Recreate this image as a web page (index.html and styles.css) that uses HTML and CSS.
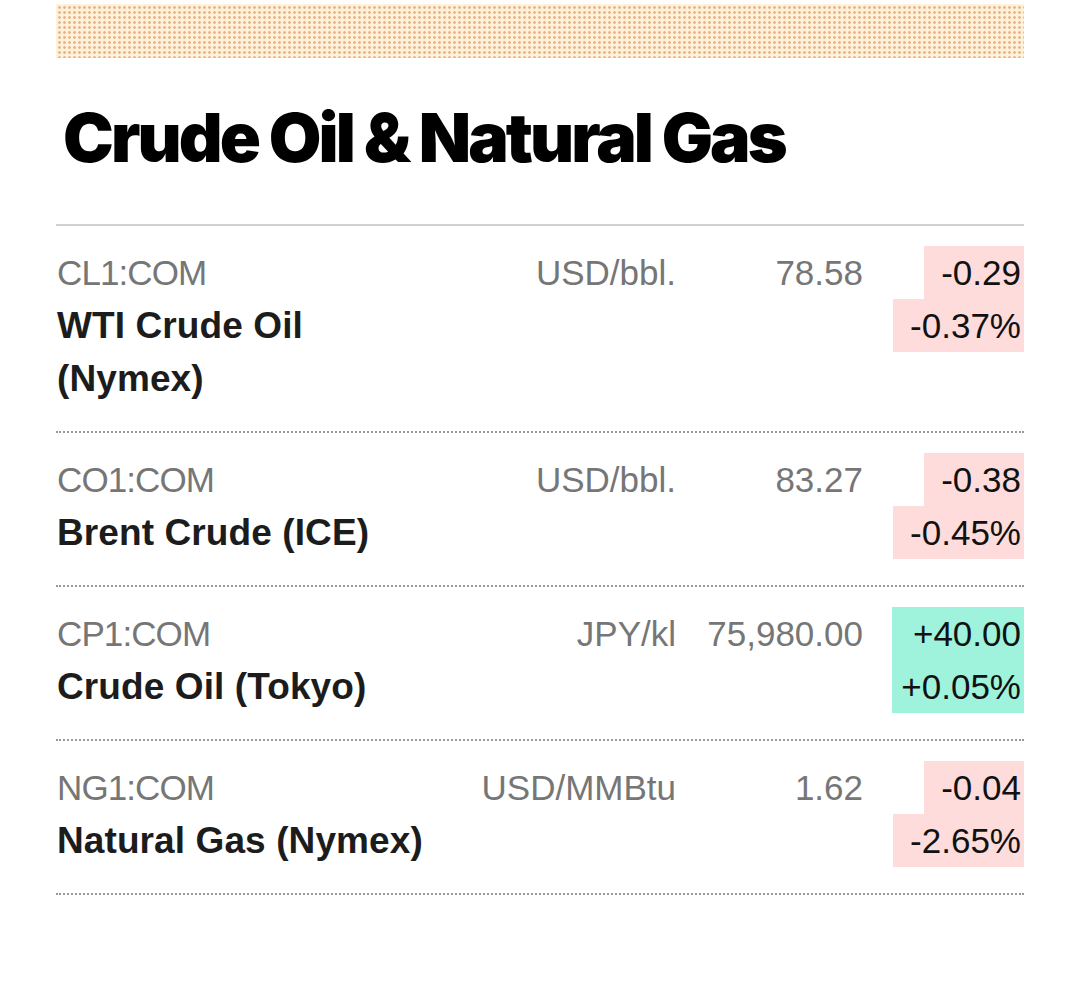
FILE: index.html
```html
<!DOCTYPE html>
<html>
<head>
<meta charset="utf-8">
<link rel="stylesheet" href="styles.css">
</head>
<body>
<div class="page">
  <div class="banner"></div>
  <h1 class="title">Crude Oil &amp; Natural Gas</h1>
  <div class="table">
    <div class="row">
      <div class="ident">
        <div class="code">CL1:COM</div>
        <div class="name">WTI Crude Oil (Nymex)</div>
      </div>
      <div class="unit">USD/bbl.</div>
      <div class="price">78.58</div>
      <div class="change down"><span>-0.29</span><span>-0.37%</span></div>
    </div>
    <div class="row">
      <div class="ident">
        <div class="code">CO1:COM</div>
        <div class="name">Brent Crude (ICE)</div>
      </div>
      <div class="unit">USD/bbl.</div>
      <div class="price">83.27</div>
      <div class="change down"><span>-0.38</span><span>-0.45%</span></div>
    </div>
    <div class="row">
      <div class="ident">
        <div class="code">CP1:COM</div>
        <div class="name">Crude Oil (Tokyo)</div>
      </div>
      <div class="unit">JPY/kl</div>
      <div class="price">75,980.00</div>
      <div class="change up"><span>+40.00</span><span>+0.05%</span></div>
    </div>
    <div class="row">
      <div class="ident">
        <div class="code">NG1:COM</div>
        <div class="name">Natural Gas (Nymex)</div>
      </div>
      <div class="unit">USD/MMBtu</div>
      <div class="price">1.62</div>
      <div class="change down"><span>-0.04</span><span>-2.65%</span></div>
    </div>
  </div>
</div>
</body>
</html>
```

FILE: styles.css
```css
html, body {
  margin: 0;
  padding: 0;
  background: #ffffff;
}

.page {
  margin: 0 56px;
  padding-top: 4px;
  font-family: "Liberation Sans", Arial, sans-serif;
}

.banner {
  height: 54px;
  background-color: #fdf1da;
  background-image: radial-gradient(circle, #e9b68c 1.1px, transparent 1.6px);
  background-size: 5px 5px;
  background-position: 1px 1px;
}

.title {
  margin: 39px 0 47px 7px;
  font-family: Inter, "Liberation Sans", sans-serif;
  font-weight: 900;
  font-size: 68px;
  line-height: 80px;
  letter-spacing: -2.9px;
  color: #000;
}

.table {
  border-top: 2px solid #d0d0d0;
}

.row {
  display: grid;
  grid-template-columns: 380px 240px 187px 161px;
  align-items: start;
  padding: 20px 0 26px;
  border-bottom: 2px dotted #9a9a9a;
  font-size: 35px;
  line-height: 53px;
}

.ident {
  padding-left: 1px;
}

.code {
  color: #767676;
  letter-spacing: -0.9px;
}

.name {
  color: #1c1c1c;
  font-weight: 700;
  font-size: 37px;
  letter-spacing: 0.1px;
}

.unit, .price {
  color: #767676;
  text-align: right;
}

.change {
  display: flex;
  flex-direction: column;
  align-items: flex-end;
  color: #111111;
}

.change span {
  padding: 0 3px 0 17px;
}

.change.down span {
  background: #fddcdb;
}

.change.up span {
  box-sizing: border-box;
  min-width: 132px;
  padding-left: 6px;
  text-align: right;
  background: #9ff3dc;
}
```
